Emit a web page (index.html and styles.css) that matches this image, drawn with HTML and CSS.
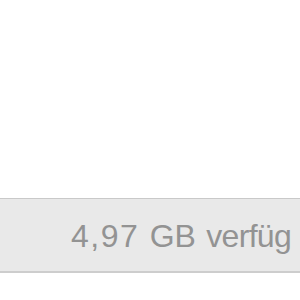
FILE: index.html
```html
<!DOCTYPE html>
<html lang="de">
<head>
    <meta charset="UTF-8">
    <meta name="viewport" content="width=device-width, initial-scale=1.0">
    <title>Speicher</title>
    <link rel="stylesheet" href="styles.css">
</head>
<body>

<main class="page">
    <div class="blank"></div>
    <div class="storage-bar">
        <div class="storage-text">
            <span class="amount">4,97</span> <span class="unit">GB</span> <span class="label">verfügbar</span>
        </div>
    </div>
</main>

</body>
</html>
```

FILE: styles.css
```css
body {
    font-family: "Liberation Sans", Arial, sans-serif;
    background: #ffffff;
    margin: 0;
    padding: 0;
    overflow: hidden;
}

.page {
    width: 300px;
    height: 300px;
    overflow: hidden;
}

.blank {
    height: 198px;
}

.storage-bar {
    height: 70px;
    background-color: #e9e9e9;
    border-top: 1px solid #c9c9c9;
    border-bottom: 2px solid #cdcdcd;
    padding: 2px 8px 0 71px;
    box-sizing: content-box;
    display: flex;
    align-items: center;
}

.storage-text {
    flex: 1;
    min-width: 0;
    overflow: hidden;
    white-space: nowrap;
    font-size: 32px;
    color: #939393;
    word-spacing: 1.5px;
}

.amount {
    letter-spacing: 1.5px;
}

.label {
    letter-spacing: -0.7px;
}
```
